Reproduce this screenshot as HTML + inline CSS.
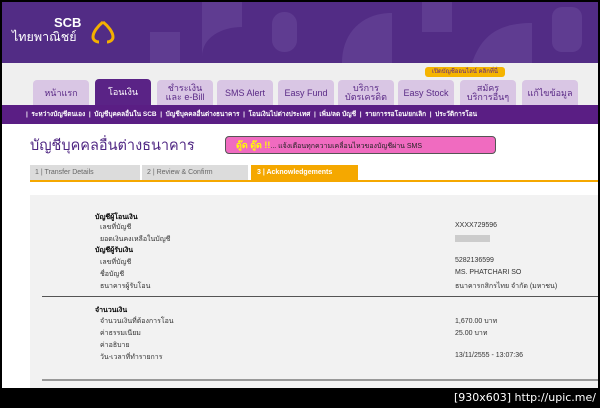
<!DOCTYPE html><html><head><meta charset="utf-8"><style>
*{margin:0;padding:0;box-sizing:border-box}
body{width:600px;height:408px;background:#000;position:relative;overflow:hidden;font-family:"Liberation Sans","Noto Sans CJK SC",sans-serif}
.a{position:absolute}
.page{left:2px;top:2px;width:596px;height:386px;background:#fff;overflow:hidden}
.hdr{left:0;top:0;width:596px;height:61px;background:#522c85}
.band{left:0;top:61px;width:596px;height:42px;background:#efefef}
.tab{top:78px;height:26px;width:56px;background:#d9c6e4;border-radius:4px 4px 0 0;color:#5a2a86;font-size:9px;text-align:center;display:flex;align-items:center;justify-content:center;line-height:9px}
.tab.on{background:#5a2386;color:#fff;top:77px;height:27px}
.sub{left:0;top:103px;width:596px;height:19px;background:#5a1e84;color:#fff;font-size:6.5px;font-weight:bold;line-height:19px;white-space:nowrap;padding-left:24px}
.t{font-size:7px;color:#333;white-space:nowrap}
.b{font-weight:bold;color:#000}
</style></head><body>
<div class="a page">
<div class="a hdr">
<svg class="a" style="left:140px;top:0" width="456" height="61"><g fill="#6b4a9c" opacity=".55"><rect x="8" y="30" width="30" height="31"/><path d="M60 0h40v25c-20 0-40 10-40 30z"/><rect x="130" y="10" width="25" height="40" rx="12"/><path d="M200 61c0-30 20-50 50-50v50z"/><rect x="280" y="0" width="30" height="30"/><path d="M330 61c10-30 30-40 60-40v40z"/><rect x="410" y="5" width="30" height="45" rx="10"/></g></svg>
<div class="a" style="left:52px;top:13px;color:#fff;font-size:13px;font-weight:bold">SCB</div>
<div class="a" style="left:10px;top:25px;color:#fff;font-size:12.5px">ไทยพาณิชย์</div>
<svg class="a" style="left:88px;top:18px" width="26" height="24"><path d="M13 2C8 6 3 12 3 17c0 3 3 5 6 5M13 2c5 4 10 10 10 15 0 3-3 5-6 5" fill="none" stroke="#f4b000" stroke-width="3"/></svg>
</div>
<div class="a band"></div>
<div class="a" style="left:423px;top:65px;width:80px;height:10px;background:#f5b400;border-radius:3px;font-size:6px;color:#5a2386;text-align:center;line-height:10px">เปิดบัญชีออนไลน์ คลิกที่นี่</div>
<div class="a tab" style="left:31px">หน้าแรก</div>
<div class="a tab on" style="left:93px">โอนเงิน</div>
<div class="a tab" style="left:155px">ชำระเงิน<br>และ e-Bill</div>
<div class="a tab" style="left:215px">SMS Alert</div>
<div class="a tab" style="left:276px">Easy Fund</div>
<div class="a tab" style="left:336px">บริการ<br>บัตรเครดิต</div>
<div class="a tab" style="left:396px">Easy Stock</div>
<div class="a tab" style="left:458px">สมัคร<br>บริการอื่นๆ</div>
<div class="a tab" style="left:520px">แก้ไขข้อมูล</div>
<div class="a sub">| &nbsp;ระหว่างบัญชีตนเอง &nbsp;| &nbsp;บัญชีบุคคลอื่นใน SCB &nbsp;| &nbsp;บัญชีบุคคลอื่นต่างธนาคาร &nbsp;| &nbsp;โอนเงินไปต่างประเทศ &nbsp;| &nbsp;เพิ่ม/ลด บัญชี &nbsp;| &nbsp;รายการรอโอน/ยกเลิก &nbsp;| &nbsp;ประวัติการโอน</div>
<div class="a" style="left:28px;top:132px;font-size:14.5px;color:#4f2683">บัญชีบุคคลอื่นต่างธนาคาร</div>
<div class="a" style="left:223px;top:134px;width:271px;height:18px;background:#f06bc0;border:1px solid #555;border-radius:4px;font-size:7px;color:#222;line-height:16px;padding-left:10px"><b style="color:#ff0;font-size:9px">ดู๊ด ดู๊ด !!</b>... แจ้งเตือนทุกความเคลื่อนไหวของบัญชีผ่าน SMS</div>
<div class="a" style="left:28px;top:163px;width:110px;height:15px;background:#dcdcdc;font-size:7px;color:#666;line-height:15px;padding-left:5px">1 | Transfer Details</div>
<div class="a" style="left:140px;top:163px;width:106px;height:15px;background:#dcdcdc;font-size:7px;color:#666;line-height:15px;padding-left:5px">2 | Review &amp; Confirm</div>
<div class="a" style="left:249px;top:163px;width:107px;height:15px;background:#f5a800;font-size:7px;color:#fff;font-weight:bold;line-height:15px;padding-left:6px">3 | Acknowledgements</div>
<div class="a" style="left:28px;top:178px;width:568px;height:2px;background:#f5a800"></div>
<div class="a" style="left:28px;top:193px;width:568px;height:195px;background:#f2f2f2"></div>
<div class="a" style="left:40px;top:294px;width:556px;height:1px;background:#555"></div>
<div class="a" style="left:40px;top:377px;width:556px;height:2px;background:#999"></div>
<div class="a t b" style="left:93px;top:210px">บัญชีผู้โอนเงิน</div>
<div class="a t" style="left:98px;top:220px">เลขที่บัญชี</div>
<div class="a t" style="left:98px;top:232px">ยอดเงินคงเหลือในบัญชี</div>
<div class="a t b" style="left:93px;top:243px">บัญชีผู้รับเงิน</div>
<div class="a t" style="left:98px;top:255px">เลขที่บัญชี</div>
<div class="a t" style="left:98px;top:267px">ชื่อบัญชี</div>
<div class="a t" style="left:98px;top:279px">ธนาคารผู้รับโอน</div>
<div class="a t b" style="left:93px;top:303px">จำนวนเงิน</div>
<div class="a t" style="left:98px;top:314px">จำนวนเงินที่ต้องการโอน</div>
<div class="a t" style="left:98px;top:326px">ค่าธรรมเนียม</div>
<div class="a t" style="left:98px;top:338px">ค่าอธิบาย</div>
<div class="a t" style="left:98px;top:350px">วัน-เวลาที่ทำรายการ</div>
<div class="a t" style="left:453px;top:220px">XXXX729596</div>
<div class="a" style="left:453px;top:233px;width:35px;height:7px;background:#ccc"></div>
<div class="a t" style="left:453px;top:255px">5282136599</div>
<div class="a t" style="left:453px;top:267px">MS. PHATCHARI SO</div>
<div class="a t" style="left:453px;top:279px">ธนาคารกสิกรไทย จำกัด (มหาชน)</div>
<div class="a t" style="left:453px;top:314px">1,670.00 บาท</div>
<div class="a t" style="left:453px;top:326px">25.00 บาท</div>
<div class="a t" style="left:453px;top:350px">13/11/2555 - 13:07:36</div>
</div>
<div class="a" style="right:4px;top:391px;color:#fff;font-size:11px;font-family:'DejaVu Sans',sans-serif">[930x603] http://upic.me/</div>
</body></html>
